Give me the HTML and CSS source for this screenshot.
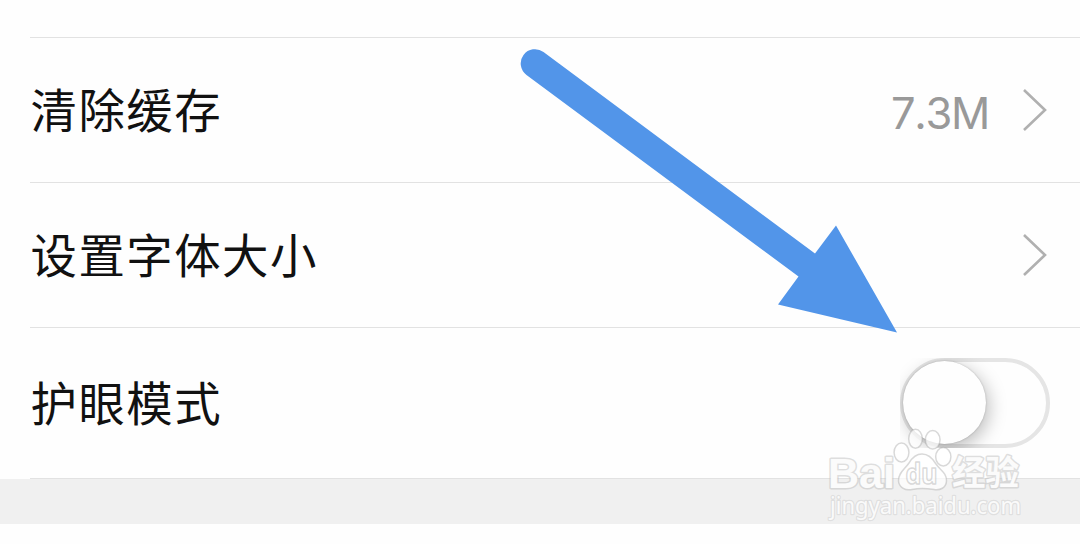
FILE: index.html
```html
<!DOCTYPE html>
<html lang="zh-CN">
<head>
<meta charset="utf-8">
<title>设置</title>
<link rel="stylesheet" href="styles.css">
</head>
<body>
<main class="screen">
  <div class="settings">
    <div class="row">
      <span class="label">清除缓存</span>
      <span class="value">7.3M</span>
      <svg class="chevron" width="26" height="44" viewBox="0 0 26 44"><path d="M2 2 23 22 2 42"/></svg>
    </div>
    <div class="row">
      <span class="label">设置字体大小</span>
      <svg class="chevron" width="26" height="44" viewBox="0 0 26 44"><path d="M2 2 23 22 2 42"/></svg>
    </div>
    <div class="row row-tall">
      <span class="label">护眼模式</span>
      <span class="switch"><span class="track"></span><span class="knob"></span></span>
    </div>
  </div>
  <div class="section-gap"></div>

  <svg class="arrow" width="380" height="286" viewBox="518 48 380 286">
    <path d="M543.5 52 815 253.500 836 225.500 897 332.500 778 304.500 798.500 276.500 526.500 75A13.9 13.9 0 0 1 543.5 52Z"/>
  </svg>

  <svg class="watermark" width="206" height="100" viewBox="822 424 206 100">
    <g class="mark">
      <text class="brand" x="828" y="488" textLength="67" lengthAdjust="spacingAndGlyphs">Bai</text>
      <ellipse cx="901.5" cy="452.5" rx="7.4" ry="9.5"/>
      <ellipse cx="915.5" cy="438.8" rx="6.8" ry="9.5"/>
      <ellipse cx="932.7" cy="439.8" rx="7.3" ry="9.3"/>
      <ellipse cx="943.3" cy="456.8" rx="7.6" ry="9.2"/>
      <path d="M922 454C929 454 933 459 936 464 940 470 947 473 946.500 481 946 488 940 490.500 934 489.500 925 488 919 488 912 489.500 905 491 899 487 898.500 481 898 473 905 469 909 463 912 458 916 454 922 454Z"/>
      <text class="du" x="905.500" y="484" textLength="32" lengthAdjust="spacingAndGlyphs">du</text>
      <text class="cn" x="952" y="485" textLength="67" lengthAdjust="spacingAndGlyphs">经验</text>
      <text class="url" x="830" y="514" textLength="191" lengthAdjust="spacingAndGlyphs">jingyan.baidu.com</text>
    </g>
  </svg>
</main>
</body>
</html>
```
FILE: styles.css
```css
* { box-sizing: border-box; }
body { margin: 0; background: #fdfdfd; }
.screen {
  position: relative;
  width: 1080px;
  height: 544px;
  padding-top: 37px;
  overflow: hidden;
  background: #fefefe;
  font-family: "Noto Sans CJK SC", sans-serif;
}
.settings { margin-left: 30px; border-bottom: 1px solid #e2e2e2; }
.row {
  display: flex;
  align-items: center;
  height: 145px;
  padding-right: 32px;
  border-top: 1px solid #e2e2e2;
}
.row-tall { height: 151px; padding-right: 30px; }
.label {
  margin: 0 auto 4px .5px;
  font-size: 46.4px;
  line-height: 72px;
  letter-spacing: 1.5px;
  color: #111;
}
.value {
  margin: 5px 33px 0 0;
  font: 400 43.5px/52px Inter, sans-serif;
  font-kerning: none;
  letter-spacing: -1.3px;
  color: #999;
}
.chevron { fill: none; stroke: #b0b0b0; stroke-width: 2.6; }
.section-gap { height: 45px; background: #f0f0f0; }
.switch { display: grid; width: 150px; height: 90px; overflow: hidden; }
.track, .knob { grid-area: 1 / 1; }
.track { border: 4px solid #e5e5e5; border-radius: 45px; }
.knob {
  width: 83px;
  height: 83px;
  margin: 3px 0 0 2.5px;
  border-radius: 50%;
  background: #fefefe;
  box-shadow: 0 0 2px rgba(0, 0, 0, .22), 3px 5px 18px rgba(0, 0, 0, .26);
}
.arrow { position: absolute; left: 518px; top: 48px; fill: #5295e9; }
.watermark { position: absolute; left: 822px; top: 424px; }
.mark {
  fill: rgba(255, 255, 255, .72);
  stroke: rgba(165, 165, 165, .42);
  stroke-width: 1.5;
  stroke-linejoin: round;
}
.brand, .cn { paint-order: stroke; stroke-width: 3; stroke: rgba(190, 190, 190, .5); fill: #fbfbfb; }
.brand { font: 700 42px "Liberation Sans", sans-serif; }
.du { font: 700 28px "Noto Sans", sans-serif; }
.cn { font: 700 34px "Noto Sans CJK SC", sans-serif; }
.url {
  font: 400 23px "Noto Sans", sans-serif;
  paint-order: stroke;
  stroke: rgba(180, 180, 180, .3);
  stroke-width: 2.4;
  fill: #fafafa;
}
```
